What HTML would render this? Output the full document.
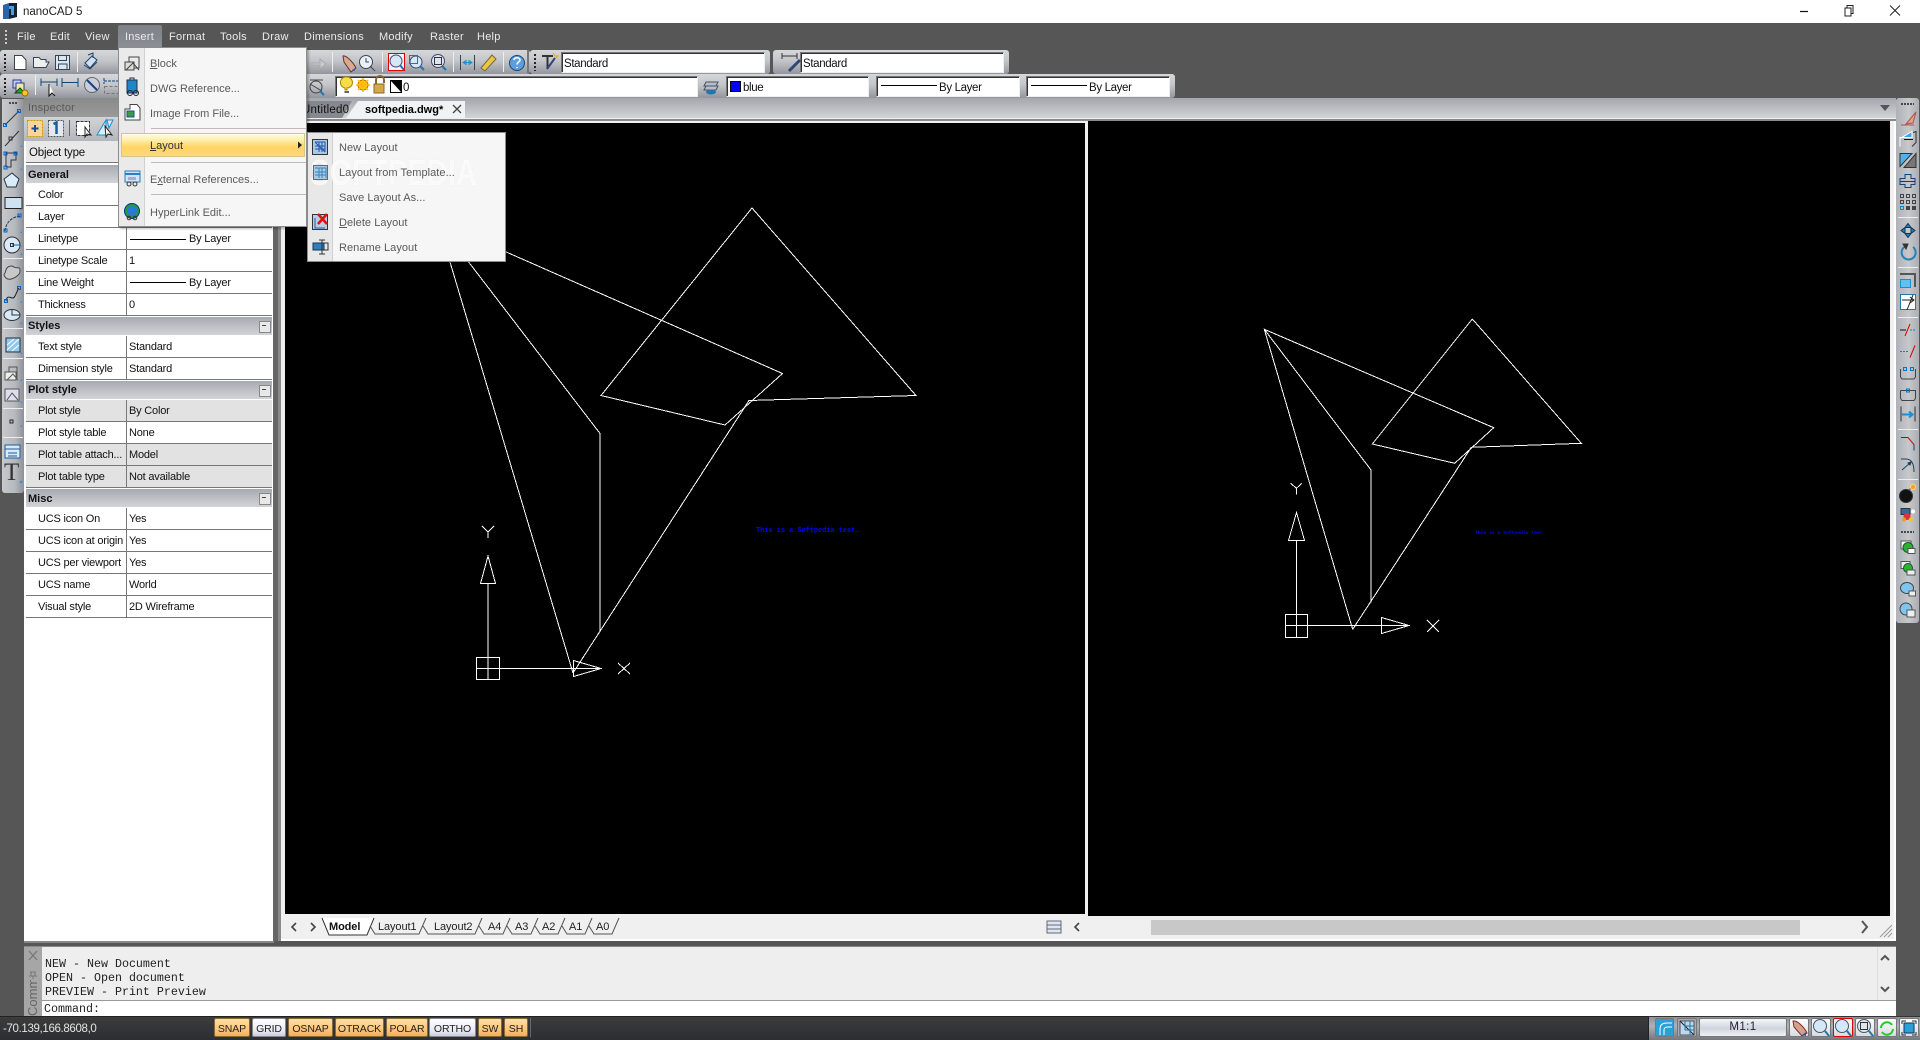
<!DOCTYPE html>
<html><head><meta charset="utf-8"><title>nanoCAD 5</title>
<style>
html,body{margin:0;padding:0;width:1920px;height:1040px;overflow:hidden;background:#565656}
body{position:relative;font-family:"Liberation Sans",sans-serif;font-size:11px;color:#111}
div,span{position:absolute;box-sizing:border-box;white-space:nowrap}
svg{position:absolute;left:0;top:0;overflow:visible}
.m{top:30px;line-height:14px;color:#eaeaea;letter-spacing:.25px}
.tb{background:linear-gradient(#d5d7da,#c3c5c9 45%,#92959c);border-radius:3px}
.f{background:#fff;border:1px solid #777;border-right-color:#eee;border-bottom-color:#eee;line-height:22px;padding-left:2px;font-size:11.5px;letter-spacing:-.35px;color:#111;box-shadow:inset 1px 1px 0 #333}
.r{left:26px;width:246px;height:22px;background:#fff;border-bottom:1px solid #777;line-height:23px;letter-spacing:-.2px}
.r.g{background:#e2e2e2}
.r i{position:absolute;font-style:normal;left:12px;top:0}
.r b{position:absolute;font-weight:normal;left:100px;top:0;height:21px;border-left:1px solid #777;padding-left:2px}
.h{left:26px;width:246px;height:18px;background:linear-gradient(#a7aab1,#d2d4d7);font-weight:bold;line-height:19px;padding-left:2px;font-size:11px}
.h u{position:absolute;left:233px;top:4px;width:10px;height:10px;background:#e8e8e8;border:1px solid #888;text-decoration:none}
.h u:after{content:"";position:absolute;left:2px;top:3px;width:4px;height:1px;background:#444}
.mi{left:150px;color:#5a5a5a;line-height:16px}
.si{left:339px;color:#5a5a5a;line-height:16px;letter-spacing:.05px}
.sb{top:1018px;height:19px;line-height:20px;text-align:center;font-size:10.5px;letter-spacing:-.1px;color:#222;border:1px solid #8a6a30;border-radius:2px;background:linear-gradient(#ffdca8,#ffcb80 50%,#f2b05a)}
.sb.w{background:linear-gradient(#fff,#e6e9f0 70%,#c8cfe0);border-color:#888}
.t{top:920px;line-height:14px;font-size:11px;letter-spacing:-.1px;color:#222}
.mono{left:45px;font-family:"Liberation Mono",monospace;font-size:11.67px;line-height:14px;color:#222}
.sq{top:1018px;height:19px;background:linear-gradient(#fdfdfd,#d8dbe2);border:1px solid #777;border-radius:2px}
</style></head><body>

<!-- title bar -->
<div style="left:0;top:0;width:1920px;height:23px;background:#fff"></div>
<div style="left:23px;top:5px;font-size:11.5px;line-height:14px;color:#222">nanoCAD 5</div>
<svg width="1920" height="23">
<path d="M3 5 L9 3 V19 L3 19Z" fill="#2a63a8"/><path d="M9 3 H17 V17 L9 19Z" fill="#123"/><path d="M9 6 H14 V15 H11 V9 H9Z" fill="#4a9fe0"/>
<path d="M1800 11.5H1808" stroke="#111" stroke-width="1.2"/>
<rect x="1845" y="8" width="6" height="8" fill="#fff" stroke="#222"/><path d="M1847 8V5.5H1853V13.5H1851" fill="none" stroke="#222"/>
<path d="M1890 5.5L1900 15.5M1900 5.5L1890 15.5" stroke="#222" fill="none"/>
</svg>

<!-- menu bar -->
<svg width="30" height="50"><path d="M6 30v2M6 34v2M6 38v2M6 42v2" stroke="#ccc" stroke-width="2"/></svg>
<div style="left:118px;top:25px;width:44px;height:23px;background:linear-gradient(#7d8087,#8b8f96);border-radius:2px 2px 0 0"></div>
<div class="m" style="left:17px">File</div><div class="m" style="left:50px">Edit</div><div class="m" style="left:85px">View</div><div class="m" style="left:125px">Insert</div><div class="m" style="left:169px">Format</div><div class="m" style="left:220px">Tools</div><div class="m" style="left:262px">Draw</div><div class="m" style="left:304px">Dimensions</div><div class="m" style="left:379px">Modify</div><div class="m" style="left:430px">Raster</div><div class="m" style="left:477px">Help</div>

<!-- toolbars -->
<div class="tb" style="left:0;top:50px;width:530px;height:24px"></div>
<div class="tb" style="left:530px;top:50px;width:240px;height:24px"></div>
<div class="tb" style="left:773px;top:50px;width:236px;height:24px"></div>
<div class="tb" style="left:0;top:74px;width:1175px;height:24px"></div>
<div class="f" style="left:561px;top:52px;width:204px;height:21px">Standard</div>
<div class="f" style="left:800px;top:52px;width:204px;height:21px">Standard</div>
<div class="f" style="left:335px;top:76px;width:363px;height:21px;padding-left:67px">0</div>
<div class="f" style="left:726px;top:76px;width:143px;height:21px;padding-left:16px">blue</div>
<div style="left:730px;top:81px;width:11px;height:11px;background:#00f;border:1px solid #000"></div>
<div class="f" style="left:876px;top:76px;width:144px;height:21px;padding-left:62px">By Layer</div>
<div style="left:881px;top:85px;width:56px;height:1px;background:#000"></div>
<div class="f" style="left:1026px;top:76px;width:144px;height:21px;padding-left:62px">By Layer</div>
<div style="left:1031px;top:85px;width:56px;height:1px;background:#000"></div>

<!-- doc area -->
<div style="left:278px;top:98px;width:1618px;height:843px;background:#f0f0f0;border-bottom:2px solid #fff;border-right:2px solid #fff"></div>
<div style="left:278px;top:98px;width:1618px;height:21px;background:linear-gradient(#a3a6ad,#d2d4d6);border-bottom:1px solid #eee"></div>
<div style="left:278px;top:119px;width:1618px;height:2px;background:#8a8a8a"></div>
<div style="left:278px;top:121px;width:3px;height:820px;background:#8a8a8a"></div>
<svg width="1920" height="130">
<path d="M284 118 L296 101 H352 L342 118Z" fill="#85888e"/>
<path d="M346 118 L358 101 H465 V118Z" fill="#f1f2f3"/>
<path d="M1880 105H1890L1885 111Z" fill="#555"/>
<path d="M453 105l8 8M461 105l-8 8" stroke="#444" stroke-width="1.3" fill="none"/>
</svg>
<div style="left:307px;top:102px;width:46px;height:15px;overflow:hidden"><div style="left:-5px;top:1px;line-height:14px;font-size:11.5px;letter-spacing:.2px;color:#111">Untitled0</div></div>
<div style="left:365px;top:103px;line-height:14px;font-weight:bold;color:#000">softpedia.dwg*</div>

<!-- viewports -->
<div style="left:285px;top:123px;width:800px;height:791px;background:#000"></div>
<div style="left:1088px;top:121px;width:802px;height:795px;background:#000"></div>

<svg width="1920" height="1040" fill="none" stroke="#fff" shape-rendering="crispEdges">
<path d="M573 673L749 400.5L916 395.5L752 208L601 395.5L725 425L782.5 373.5L438 222L573 673M438 222L600 433.5V632"/>
<path d="M476.5 657.5H499.5V679.5H476.5ZM476.5 668.5H600M488 679.5V584M480.5 583.5H495.5L488 556ZM573.5 660.5V676.5L601 668.5Z"/>
<path d="M482 526L488 532L494 526M488 532V538M618 663L630 674M630 663L618 674"/>
<path d="M1352.7 629.3L1471.3 447.3L1581.3 443.3L1472.3 319L1372.3 444L1454.7 463.3L1493.7 427.7L1264.3 329.3L1352.7 629.3M1264.3 329.3L1371 470V602.7"/>
<path d="M1285.5 614.5H1307.5V637.5H1285.5ZM1285.5 625.5H1409M1296.5 637.5V540.5M1288.5 540.5H1304.5L1296.5 512.5ZM1381.5 617.5V633.5L1409 625.5Z"/>
<path d="M1290.7 483.3L1296.3 488.3L1302 483.3M1296.3 488.3V494.3M1427 620L1439 632M1439 620L1427 632"/>
</svg>
<div style="left:756px;top:527px;font-family:'Liberation Mono',monospace;font-weight:bold;font-size:6.9px;line-height:8px;color:#00f">This is a Softpedia test.</div>
<div style="left:1475px;top:530px;font-family:'Liberation Mono',monospace;font-weight:bold;font-size:4.7px;line-height:7px;color:#00f">This is a Softpedia test.</div>

<!-- layout tabs -->
<div style="left:285px;top:916px;width:800px;height:22px;background:#f0f0f0"></div>
<svg width="1920" height="1040" fill="none">
<path d="M296 923l-4 4 4 4M311 923l4 4-4 4" stroke="#444" stroke-width="1.6"/>
<path d="M322 918L329 935H367L374 918" fill="#fff" stroke="#333"/>
<path d="M370 926L375 934H419L426 918M423 926L428 934H475L482 918M479 926L484 934H503L510 918M507 926L512 934H531L538 918M535 926L540 934H558L565 918M562 926L567 934H585L592 918M589 926L594 934H612L619 918" stroke="#555"/>
<rect x="1047" y="921" width="14" height="12" fill="#dfe6f3" stroke="#667"/><path d="M1047 925H1061M1047 929H1061" stroke="#667"/>
<path d="M1079 923l-4 4 4 4" stroke="#444" stroke-width="1.6"/>
<path d="M1862 921l5 6-5 6" stroke="#555" stroke-width="2"/>
<path d="M1880 937L1892 925M1884 937L1892 929M1888 937L1892 933" stroke="#999"/>
</svg>
<div class="t" style="left:329px;font-weight:bold;color:#111">Model</div>
<div class="t" style="left:378px">Layout1</div><div class="t" style="left:434px">Layout2</div><div class="t" style="left:488px">A4</div><div class="t" style="left:515px">A3</div><div class="t" style="left:542px">A2</div><div class="t" style="left:569px">A1</div><div class="t" style="left:596px">A0</div>
<div style="left:1151px;top:920px;width:649px;height:15px;background:#c8c8c8"></div>

<!-- left toolbar -->
<div style="left:2px;top:99px;width:22px;height:394px;background:linear-gradient(90deg,#c7cacd,#b5b8bc 60%,#8d9097);border-radius:0 0 3px 3px"></div>
<svg width="30" height="500" fill="none" stroke="#333">
<path d="M9 103h9" stroke="#222" stroke-dasharray="2 1" stroke-width="1.5"/>
<path d="M5 125L19 111" stroke="#333"/><rect x="3.5" y="123.5" width="3" height="3" stroke="#06c"/><rect x="17.5" y="109.5" width="3" height="3" stroke="#06c"/>
<path d="M5 146L19 131M5 146" stroke="#333"/><rect x="9" y="137" width="3" height="3" stroke="#333"/>
<path d="M6 153H16V160H11V167H6Z" stroke="#334"/><g stroke="#06c"><rect x="4" y="152" width="3" height="3"/><rect x="14" y="152" width="3" height="3"/><rect x="4" y="166" width="3" height="3"/></g>
<path d="M12 173L19 179L16 187H7L4 179Z" fill="#d9ecf8" stroke="#234"/>
<rect x="5" y="197.5" width="17" height="11" fill="#cfe2f2" stroke="#222"/>
<path d="M5 231C6 222 12 217 20 216" stroke="#234" stroke-dasharray="3 1"/><rect x="4" y="229" width="3" height="3" stroke="#06c"/><rect x="18" y="214" width="3" height="3" stroke="#06c"/>
<circle cx="12" cy="245" r="8" fill="#dce8f2" stroke="#234"/><path d="M12 245H20" stroke="#06c"/><rect x="10.5" y="243.5" width="3" height="3" stroke="#234"/>
<path d="M3 258.500H23M3 328.500H23M3 358.500H23M3 408.500H23M3 437.500H23" stroke="#eee"/>
<path d="M6 270c1-4 6-5 8-3s6-1 6 3-1 4-3 6-8 5-11 2-2-4-1-5 0-2 1-3z" fill="#c8c8c8" stroke="#444"/>
<path d="M6 301C8 292 12 302 15 296S17 291 19 288" stroke="#123"/><rect x="4.500" y="299.500" width="3" height="3" stroke="#06c"/><rect x="17.500" y="286.500" width="3" height="3" stroke="#06c"/>
<ellipse cx="12" cy="315" rx="8" ry="5.500" fill="#dce8f2" stroke="#234"/><path d="M12 309V315H20" stroke="#234"/>
<rect x="6" y="338" width="14" height="14" fill="#8fc8ee" stroke="#234"/><path d="M7 350L19 339M7 345L14 339M12 351L19 345" stroke="#fff"/>
<rect x="5" y="372" width="11" height="8" fill="#eee" stroke="#555"/><path d="M9 372V367H17V378M7 380L13 374L18 380" stroke="#555"/>
<path d="M5 389H19V401H5ZM7 400L12 393L18 400" fill="#dde" stroke="#555"/>
<rect x="10" y="420" width="3" height="3" stroke="#222"/>
<rect x="5" y="445" width="15" height="13" fill="#dbe9f6" stroke="#1b5d9c"/><path d="M5 449H20M8 453H17M8 456H17" stroke="#1b5d9c"/>
<path d="M19 483l3-3v3zM20 147l2-2v2zM20 170l2-2v2zM20 210l2-2v2zM20 233l2-2v2zM20 255l2-2v2zM20 303l2-2v2zM20 324l2-2v2zM20 354l2-2v2zM20 381l2-2v2zM20 403l2-2v2zM20 427l2-2v2z" fill="#2a8fe0" stroke="none"/>
</svg>
<div style="left:4px;top:459px;font-family:'Liberation Serif',serif;font-size:25px;line-height:28px;color:#333">T</div>

<!-- inspector -->
<div style="left:24px;top:98px;width:250px;height:843px;background:#fff"></div>
<div style="left:24px;top:98px;width:250px;height:19px;background:linear-gradient(#8a8a8a,#9a9a9a)"></div>
<div style="left:28px;top:101px;font-size:11px;line-height:14px;color:#5a5a5a;letter-spacing:.2px">Inspector</div>
<div style="left:24px;top:117px;width:250px;height:24px;background:linear-gradient(#d2d4d7,#b3b6bb)"></div>
<svg width="130" height="145" fill="none">
<rect x="27.500" y="120.500" width="15" height="16" fill="#fcd39a" stroke="#c90" stroke-dasharray="2 1"/><path d="M35 125V132M31.500 128.500H38.500" stroke="#1b4d8c" stroke-width="2"/>
<rect x="48.500" y="120.500" width="15" height="16" fill="#e5e8ee" stroke="#555" stroke-dasharray="2 1"/><path d="M53.500 124L56.500 122.500V134" stroke="#1b5d9c" stroke-width="2.500"/>
<path d="M69.500 120V136" stroke="#666"/>
<rect x="76.500" y="121.500" width="13" height="14" fill="#fff" stroke="#333" stroke-dasharray="3 1"/><path d="M85 127L91 135L87 134L85 137Z" fill="#fff" stroke="#222"/>
<path d="M97 135L106 120V135ZM107 120H113L109 128Z" fill="#d7eefb" stroke="#1a8fd0"/><path d="M105 126L112 135L108 134L106 137Z" fill="#fff" stroke="#222"/>
</svg>
<div class="r g" style="top:141px;background:#e8e8e8;height:22px;font-size:11.5px;line-height:25px;padding-left:3px">Object type</div>
<div class="h" style="top:165px;line-height:20px">General</div>
<div class="r" style="top:184px"><i>Color</i></div>
<div class="r" style="top:206px"><i>Layer</i></div>
<div class="r" style="top:228px"><i>Linetype</i><b style="padding-left:62px">By Layer</b></div><div style="left:130px;top:239px;width:56px;height:1px;background:#000"></div>
<div class="r" style="top:250px"><i>Linetype Scale</i><b>1</b></div>
<div class="r" style="top:272px"><i>Line Weight</i><b style="padding-left:62px">By Layer</b></div><div style="left:130px;top:282px;width:56px;height:1px;background:#000"></div>
<div class="r" style="top:294px"><i>Thickness</i><b>0</b></div>
<div class="h" style="top:317px">Styles<u></u></div>
<div class="r" style="top:336px"><i>Text style</i><b>Standard</b></div>
<div class="r" style="top:358px"><i>Dimension style</i><b>Standard</b></div>
<div class="h" style="top:381px">Plot style<u></u></div>
<div class="r g" style="top:400px"><i>Plot style</i><b>By Color</b></div>
<div class="r" style="top:422px"><i>Plot style table</i><b>None</b></div>
<div class="r g" style="top:444px"><i>Plot table attach...</i><b>Model</b></div>
<div class="r g" style="top:466px"><i>Plot table type</i><b>Not available</b></div>
<div class="h" style="top:489px;line-height:20px">Misc<u></u></div>
<div class="r" style="top:508px"><i>UCS icon On</i><b>Yes</b></div>
<div class="r" style="top:530px"><i>UCS icon at origin</i><b>Yes</b></div>
<div class="r" style="top:552px"><i>UCS per viewport</i><b>Yes</b></div>
<div class="r" style="top:574px"><i>UCS name</i><b>World</b></div>
<div class="r" style="top:596px"><i>Visual style</i><b>2D Wireframe</b></div>
<div style="left:273px;top:98px;width:5px;height:843px;background:#666"></div>
<div style="left:24px;top:941px;width:250px;height:2px;background:#888"></div>

<!-- toolbar icons -->
<svg width="1920" height="100" fill="none">
<path d="M5 54v2M5 58v2M5 62v2M5 66v2M5 70v1M5 78v2M5 82v2M5 86v2M5 90v2M5 94v1M535 54v2M535 58v2M535 62v2M535 66v2M535 70v1" stroke="#222" stroke-width="2"/>
<path d="M14.500 55.500H22L26 60V69.500H14.500Z" fill="#fff" stroke="#345"/>
<path d="M33.500 67.500V57.500H39L41 59.500H46V62H49L46 67.500Z" fill="#eee" stroke="#345"/>
<path d="M55.500 55.500H69.500V69.500H55.500Z" fill="#dce6f0" stroke="#345"/><path d="M58.500 55.500V60.500H66.500V55.500M58.500 69.500V64H67V69.500" stroke="#345"/>
<path d="M77.500 52V72" stroke="#eee"/>
<path d="M85 63L92 56L97 60L90 68Z" fill="#cfe0f2" stroke="#246"/><path d="M88 55L93 53V58M84 65L90 69L97 62" stroke="#246"/>
<path d="M35.500 75V95M503.500 52V72M332.500 52V72M382.500 52V72M453.500 52V72" stroke="#eee"/>
<path d="M312 63H320V59L326 64L320 69V65H312Z" fill="#c6c9ce" stroke="#aaa"/>
<path d="M343 56C346 55 353 62 356 68L351 72L344 62Z" fill="#d8a890" stroke="#633"/><path d="M352 70l3-2v3z" fill="#2a5fc0"/>
<circle cx="366" cy="62" r="6.500" fill="#eaf3fa" stroke="#445"/><path d="M366 58V62H369M370 66L375 71" stroke="#445"/>
<rect x="388.500" y="53.500" width="16" height="17" fill="#eef5fb" stroke="#d00" /><circle cx="396" cy="61" r="6" fill="#d5e8f8" stroke="#447"/><path d="M400 65L404 70" stroke="#27a" stroke-width="2"/>
<circle cx="416" cy="62" r="6" fill="#d5e8f8" stroke="#447"/><rect x="409.500" y="55.500" width="8" height="8" stroke="#27a"/><path d="M420 66L424 70" stroke="#27a" stroke-width="2"/>
<circle cx="438" cy="61" r="6.500" fill="#dde6ee" stroke="#447"/><rect x="434.500" y="57.500" width="7" height="7" stroke="#333"/><path d="M442 66L446 70" stroke="#27a" stroke-width="2"/>
<path d="M460.500 55V70M474.500 55V70" stroke="#345"/><path d="M463 62.500H472M463 62.500l3-2v4zM472 62.500l-3-2v4z" stroke="#1a8fd0"/>
<path d="M481 68L492 55L496 59L485 71Z" fill="#e8c840" stroke="#764"/>
<circle cx="517" cy="63" r="7.500" fill="#5c9ee0" stroke="#246"/><path d="M514 60c0-3 6-3 6 0 0 2-3 2-3 4.500M517 67v1" stroke="#fff" stroke-width="1.500"/>
<path d="M528 50V73" stroke="#777" stroke-width="2"/>
<path d="M542 56H553M547.500 56V69" stroke="#333" stroke-width="2"/><path d="M547 69L555 58" stroke="#347" stroke-width="2"/><path d="M553 53l2 3 3 0-2 2" stroke="#ea0"/>
<path d="M782 56H797M782 53V59M797 53V59" stroke="#333"/><path d="M789 71L800 60" stroke="#347" stroke-width="3"/>
<rect x="13" y="80" width="8" height="8" fill="#bcd3f0" stroke="#339"/><rect x="16" y="83" width="8" height="8" fill="#e8f0a0" stroke="#339"/><path d="M20 88L25 93H15Z" fill="#2a2" stroke="#141"/><circle cx="25" cy="93" r="3" fill="#ec2" stroke="#a60"/>
<path d="M41 78.500V86M57 78.500V86M41 82H57" stroke="#147"/><path d="M49 84L49 96L52 93L55 96" fill="#fff" stroke="#111"/>
<path d="M62 78V87M78 78V87M62 82.500H78" stroke="#147"/>
<circle cx="92" cy="85" r="7.500" fill="#ccd" stroke="#666"/><path d="M87 80L97 90" stroke="#147" stroke-width="2"/>
<path d="M104 78V84M119 78V84M104 81H119" stroke="#147" stroke-dasharray="3 1"/><rect x="104.500" y="86.500" width="14" height="7" stroke="#777" stroke-dasharray="3 2"/>
<circle cx="316" cy="87" r="6" stroke="#444"/><path d="M310 80H323M310 84L322 91" stroke="#444"/><path d="M320 91L324 95" stroke="#27a" stroke-width="2"/>
<path d="M347 77a5.500 5.500 0 0 1 0 11V90H345V88A5.500 5.500 0 0 1 347 77Z" fill="#f7dc4c" stroke="#a80"/><path d="M344.500 92H349" stroke="#666" stroke-width="2"/>
<circle cx="363" cy="85" r="5" fill="#fc2" stroke="#c60"/><path d="M363 78V92M356 85H370M358 80L368 90M368 80L358 90" stroke="#fb0" stroke-width="1.500"/>
<rect x="374" y="84" width="10" height="9" fill="#d8a845" stroke="#863"/><path d="M376 84V80a4 4 0 0 1 8 0V83" stroke="#863" stroke-width="2"/>
<rect x="390.500" y="80.500" width="11" height="12" fill="#fff" stroke="#000"/><path d="M390.500 80.500H401.500V92.500Z" fill="#000"/>
<path d="M706 82H718L716 86H704ZM706 86H718L716 90H704Z" fill="#bbc" stroke="#456"/><ellipse cx="711" cy="92" rx="5" ry="2.500" fill="#27a"/>
</svg>

<!-- right toolbar -->
<div style="left:1896px;top:98px;width:23px;height:525px;background:linear-gradient(90deg,#aeb1b7,#c6c8cb 55%,#aaadb3);border-radius:3px"></div>
<svg width="1920" height="640" fill="none" stroke="#333">
<path d="M1901 104H1914" stroke="#222" stroke-dasharray="2 1" stroke-width="1.500"/>
<g transform="translate(0,2)"><path d="M1901 123H1914M1906 122L1916 110L1913 121Z" fill="#e8a080" stroke="#a55"/></g>
<g transform="translate(0,3.500)"><path d="M1900 143V135L1912 128V134H1900Z" fill="#37a8ea" stroke="#fff"/><path d="M1913 129L1916 128V139L1912 143" stroke="#333"/><path d="M1904 136H1913" stroke="#111"/></g>
<g transform="translate(0,4.500)"><path d="M1900 162L1912 149H1900Z" fill="#4fb3e8"/><path d="M1904 163L1916 149V163Z" fill="#777"/></g>
<g transform="translate(0,5.500)"><path d="M1905 169H1911V173H1915V179H1911V182H1905V179H1900V173H1905Z" stroke="#147"/><path d="M1900 176H1915" stroke="#333"/></g>
<g stroke="#444" transform="translate(0,7)"><rect x="1900.500" y="187.500" width="3" height="3"/><rect x="1906.500" y="187.500" width="3" height="3"/><rect x="1912.500" y="187.500" width="3" height="3"/><rect x="1900.500" y="193.500" width="3" height="3"/><rect x="1906.500" y="193.500" width="3" height="3"/><rect x="1912.500" y="193.500" width="3" height="3"/><rect x="1900.500" y="199.500" width="3" height="3" stroke="#08c"/><rect x="1906.500" y="199.500" width="3" height="3" fill="#444"/><rect x="1912.500" y="199.500" width="3" height="3" fill="#444"/></g>
<path d="M1898 217.500H1918M1898 267.500H1918M1898 317.500H1918M1898 429.500H1918M1898 479.500H1918" stroke="#eee"/>
<g transform="translate(0,9.500)"><path d="M1908 214L1911 218H1905ZM1908 228L1905 224H1911ZM1901 221L1905 218V224ZM1915 221L1911 224V218Z" fill="#2480b8" stroke="#135"/></g>
<g transform="translate(0,11)"><path d="M1913 236A7 7 0 1 1 1906 235" stroke="#2a80b8" stroke-width="2"/><path d="M1903 233L1908 233L1906 238Z" fill="#333"/></g>
<g transform="translate(0,12)"><rect x="1900.500" y="267.500" width="10" height="8" fill="#65c0ec" stroke="#1a8fd0"/><path d="M1900 262H1915V275" stroke="#555" stroke-width="2"/></g>
<g transform="translate(0,14)"><rect x="1900.500" y="280.500" width="15" height="15" fill="#fff" stroke="#27a"/><path d="M1902 286H1914M1910 283L1914 286L1910 289M1913 281L1907 296" stroke="#222"/></g>
<g transform="translate(0,16)"><path d="M1900 314H1906" stroke="#111"/><path d="M1910 314H1916" stroke="#08c" stroke-dasharray="2 1"/><path d="M1905 320L1910 308" stroke="#d00"/></g>
<g transform="translate(0,17.500)"><path d="M1900 334H1908" stroke="#08c" stroke-dasharray="2 1"/><path d="M1910 340L1915 328" stroke="#d00"/></g>
<g transform="translate(0,19)"><path d="M1900.500 350V358L1902 360H1914L1915.500 358V350" stroke="#444"/><rect x="1903.500" y="348.500" width="3" height="3" stroke="#07c"/><rect x="1910.500" y="348.500" width="3" height="3" stroke="#07c"/></g>
<g transform="translate(0,20.500)"><path d="M1900.500 370V378L1902 380H1914L1915.500 378V370H1900.500" stroke="#444"/><rect x="1906.500" y="368.500" width="3" height="3" stroke="#07c"/></g>
<g transform="translate(0,21.500)"><path d="M1901 385V400M1915 385V400" stroke="#333"/><path d="M1902 393H1912M1909 390L1912.500 393L1909 396" stroke="#1a8fd0" stroke-width="2"/></g>
<g transform="translate(0,23.500)"><path d="M1901 414H1908L1914 421V427" stroke="#147"/><path d="M1908 414L1914 421" stroke="#c22"/></g>
<g transform="translate(0,25)"><path d="M1901 434H1906C1911 434 1914 438 1914 447" stroke="#147"/><path d="M1902 445L1910 438" stroke="#147"/><path d="M1908 438l3-1-1 3z" fill="#147"/></g>
<g transform="translate(0,27)"><circle cx="1906" cy="469" r="6.500" fill="#111"/><path d="M1909 463L1912 460" stroke="#555"/><circle cx="1913" cy="460" r="2.500" fill="#f93" stroke="#fd5"/></g>
<g transform="translate(0,28.500)"><rect x="1901" y="480" width="9" height="6" fill="#36a"/><g stroke="none"><circle cx="1907" cy="488" r="3.500" fill="#d33"/><circle cx="1904" cy="491" r="2" fill="#e92"/><circle cx="1911" cy="491" r="2" fill="#ec2"/><circle cx="1913" cy="483" r="2" fill="#fff"/></g></g>
<path d="M1901 532H1914" stroke="#222" stroke-dasharray="2 1" stroke-width="1.500"/>
<g transform="translate(0,30.500)"><rect x="1901" y="510.500" width="10" height="8" fill="#fff" stroke="#555"/><circle cx="1908" cy="517" r="5" fill="#2cb32c" stroke="#153"/><rect x="1908" y="518" width="7" height="5" fill="#fff" stroke="#555"/></g>
<g transform="translate(0,32)"><rect x="1901" y="529.500" width="9" height="7" fill="#eee" stroke="#555"/><circle cx="1908" cy="536" r="4.500" fill="#2cb32c" stroke="#153"/><rect x="1907" y="538" width="8" height="5" fill="#eee" stroke="#555"/></g>
<g transform="translate(0,33)"><ellipse cx="1907" cy="555" rx="6.500" ry="5.500" fill="#80c4f0" stroke="#444"/><rect x="1909" y="558" width="6.500" height="5" fill="#eee" stroke="#555"/></g>
<g transform="translate(0,35)"><circle cx="1906" cy="574" r="6" fill="#80c4f0" stroke="#444"/><rect x="1907" y="575" width="8" height="7" fill="#eee" stroke="#555"/></g>
</svg>

<!-- command -->
<div style="left:24px;top:946px;width:1872px;height:70px;background:#eee;border-top:1px solid #888"></div>
<div style="left:24px;top:947px;width:18px;height:69px;background:#a6a6a6"></div>
<div style="left:42px;top:1000px;width:1854px;height:16px;background:#fff;border-top:1px solid #999"></div>
<div style="left:1877px;top:947px;width:1px;height:53px;background:#ddd"></div>
<div class="mono" style="top:957px">NEW - New Document</div>
<div class="mono" style="top:971px">OPEN - Open document</div>
<div class="mono" style="top:985px">PREVIEW - Print Preview</div>
<div class="mono" style="left:44px;top:1002px">Command:</div>
<div style="left:26px;top:980px;width:14px;height:36px;overflow:hidden"><div style="left:0;top:36px;transform-origin:0 0;transform:rotate(-90deg);font-size:13px;line-height:14px;color:#666">Comm</div></div>
<svg width="1920" height="1040" fill="none">
<path d="M29 951L37 960M37 951L29 960" stroke="#777" stroke-width="1.300"/>
<path d="M30 972H36M31 972V976H35V972M33 976V979M29 976H37" stroke="#777"/>
<path d="M1881 960l4-4 4 4M1881 987l4 4 4-4" stroke="#555" stroke-width="2"/>
</svg>

<!-- status bar -->
<div style="left:0;top:1016px;width:1648px;height:24px;background:linear-gradient(#3c3c3c,#2c2e33);border-top:1px solid #222"></div>
<div style="left:1648px;top:1016px;width:272px;height:24px;background:linear-gradient(#8f9298,#aeb1b6 40%,#74777d);border-top:1px solid #333;border-left:1px solid #222"></div>
<div style="left:3px;top:1022px;color:#e4e4e4;line-height:14px;font-size:11.5px;letter-spacing:-.35px">-70.139,166.8608,0</div>
<div class="sb" style="left:214px;width:36px">SNAP</div>
<div class="sb w" style="left:252px;width:34px">GRID</div>
<div class="sb" style="left:288px;width:45px">OSNAP</div>
<div class="sb" style="left:335px;width:49px">OTRACK</div>
<div class="sb" style="left:386px;width:42px">POLAR</div>
<div class="sb w" style="left:429px;width:47px">ORTHO</div>
<div class="sb" style="left:478px;width:24px">SW</div>
<div class="sb" style="left:504px;width:24px">SH</div>
<div style="left:530px;top:1018px;width:1px;height:19px;background:#666"></div>
<div class="sq" style="left:1655px;width:19px;background:#2b9fd8"></div>
<div class="sq" style="left:1677px;width:20px;background:#a9acb2"></div>
<div class="sq" style="left:1699px;width:88px;text-align:center;line-height:17px;font-size:11.5px;letter-spacing:.4px;color:#223;background:linear-gradient(#f5f6f8,#cfd4de 55%,#f0f1f3)">M1:1</div>
<div class="sq" style="left:1789px;width:20px"></div><div class="sq" style="left:1811px;width:20px"></div>
<div class="sq" style="left:1833px;width:20px;border:1px solid #d00"></div><div class="sq" style="left:1855px;width:20px"></div><div class="sq" style="left:1877px;width:20px"></div><div class="sq" style="left:1899px;width:20px"></div>
<svg width="1920" height="1040" fill="none">
<path d="M1660 1035V1029Q1660 1023 1667 1023H1672M1664 1035V1030Q1664 1027 1668 1027H1672" stroke="#fff"/>
<path d="M1680 1021H1694V1035H1680Z" fill="#bfd8ee" stroke="#555"/><path d="M1680 1021L1694 1035" stroke="#222"/><path d="M1685 1021V1030M1690 1021V1035M1685 1026H1694M1685 1030H1694" stroke="#27a"/>
<path d="M1793 1021C1797 1020 1804 1027 1807 1033L1802 1036L1794 1027Z" fill="#d8a088" stroke="#733"/><path d="M1802 1035l4-3v4z" fill="#25a"/>
<circle cx="1820" cy="1026" r="6.500" fill="#d5e8f8" stroke="#456"/><path d="M1825 1031L1829 1036" stroke="#27a" stroke-width="2"/>
<circle cx="1842" cy="1026" r="6.500" fill="#d5e8f8" stroke="#456"/><path d="M1847 1031L1851 1036" stroke="#27a" stroke-width="2"/>
<circle cx="1864" cy="1026" r="6.500" fill="#dde6ee" stroke="#456"/><rect x="1860.500" y="1022.500" width="7" height="7" stroke="#333"/><path d="M1869 1031L1873 1036" stroke="#27a" stroke-width="2"/>
<path d="M1881 1028A6 6 0 0 1 1892 1025M1893 1029A6 6 0 0 1 1882 1032" stroke="#2c2" stroke-width="2"/>
<path d="M1902 1024V1021H1906M1912 1021H1916V1024M1916 1032V1035H1912M1906 1035H1902V1032" stroke="#234"/><rect x="1904" y="1023" width="10" height="10" fill="#2b9fd8" stroke="#135"/>
</svg>

<!-- Insert dropdown -->
<div style="left:118px;top:47px;width:189px;height:180px;background:#f6f6f6;border:1px solid #8c8c8c;box-shadow:2px 2px 2px rgba(0,0,0,.25)"></div>
<div style="left:119px;top:48px;width:26px;height:178px;background:#eaeaea;border-right:1px solid #d0d0d0"></div>
<div class="mi" style="top:56px"><span style="position:static;text-decoration:underline">B</span>lock</div>
<div class="mi" style="top:81px">DWG Reference...</div>
<div class="mi" style="top:106px">Image From File...</div>
<div style="left:151px;top:128px;width:155px;height:1px;background:#bbb"></div>
<div style="left:121px;top:133px;width:184px;height:24px;background:linear-gradient(#fffbe8,#fff0b0 25%,#ffd562 60%,#ffd97a);border:1px solid #d8c486"></div>
<div class="mi" style="top:138px;color:#333"><span style="position:static;text-decoration:underline">L</span>ayout</div>
<svg width="310" height="230" fill="none"><path d="M298 141.500l4 3.500-4 3.500z" fill="#222"/></svg>
<div style="left:151px;top:162px;width:155px;height:1px;background:#bbb"></div>
<div class="mi" style="top:172px">E<span style="position:static;text-decoration:underline">x</span>ternal References...</div>
<div style="left:151px;top:194px;width:155px;height:1px;background:#bbb"></div>
<div class="mi" style="top:205px">HyperLink Edit...</div>
<svg width="310" height="230" fill="none">
<rect x="125" y="62" width="9" height="8" fill="#ddd" stroke="#444"/><path d="M129 62V57H139V68H134M126 70L133 63L139 70" stroke="#444"/>
<rect x="127" y="80" width="10" height="13" fill="#1d86c4" stroke="#234"/><path d="M130 80V78H134V80" stroke="#234"/><circle cx="130" cy="93" r="2.500" stroke="#222"/><circle cx="136" cy="93" r="2.500" stroke="#222"/>
<path d="M130 104.500H137L140 108V120H125V109H130Z" fill="#fff" stroke="#444"/><rect x="127" y="111" width="7" height="6" fill="#3a9a4a" stroke="#158"/>
<rect x="125" y="171" width="15" height="11" fill="#cfe5f6" stroke="#2b80b8"/><path d="M125 174H140" stroke="#2b80b8" stroke-width="2"/><circle cx="129" cy="184" r="2" stroke="#333"/><circle cx="135" cy="184" r="2" stroke="#333"/><rect x="128" y="177" width="8" height="3" fill="#aac"/>
<circle cx="132" cy="211" r="7.500" fill="#1e9c3e" stroke="#137"/><path d="M127 208C131 205 135 206 138 210L134 217L128 214Z" fill="#2a78d8"/><circle cx="129" cy="218" r="1.800" stroke="#333"/><circle cx="135" cy="218" r="1.800" stroke="#333"/>
</svg>

<!-- Layout submenu -->
<div style="left:307px;top:132px;width:199px;height:130px;background:#f6f6f6;border:1px solid #8c8c8c;box-shadow:2px 2px 2px rgba(0,0,0,.25)"></div>
<div style="left:308px;top:133px;width:25px;height:128px;background:#e8e8e8;border-right:1px solid #d0d0d0"></div>
<div style="left:310px;top:152px;font-size:36px;font-weight:bold;line-height:42px;color:rgba(255,255,255,.8);text-shadow:0 0 1px rgba(0,0,0,.08);transform-origin:0 0;transform:scaleX(.81)">SOFTPEDIA</div>
<div class="si" style="top:140px">New Layout</div>
<div class="si" style="top:165px">Layout from Template...</div>
<div class="si" style="top:190px">Save Layout As...</div>
<div class="si" style="top:215px"><span style="position:static;text-decoration:underline">D</span>elete Layout</div>
<div class="si" style="top:240px">Rename Layout</div>
<svg width="510" height="265" fill="none">
<rect x="312.500" y="139.500" width="15" height="15" fill="#a7c9e6" stroke="#333"/><path d="M315 142H325V152M319 142V152M322 142V152M315 146H325M315 149H325M315 142L325 152" stroke="#25a"/>
<rect x="313.500" y="165.500" width="14" height="14" fill="#a7c9e6" stroke="#667"/><path d="M315 168H326V178M319 168V178M322 168V178M315 172H326M315 175H326" stroke="#38b"/>
<rect x="312.500" y="214.500" width="15" height="15" fill="#b6cfe6" stroke="#333"/><path d="M318 214L327 224M327 214L318 224" stroke="#d11" stroke-width="2.500"/><path d="M315 218V228H325" stroke="#25a"/>
<rect x="313" y="243" width="11" height="7" fill="#2c7fc0" stroke="#234"/><path d="M322 240V254M319 240H325M319 254H325M324 243H328V250H324" stroke="#333"/>
</svg>
</body></html>
